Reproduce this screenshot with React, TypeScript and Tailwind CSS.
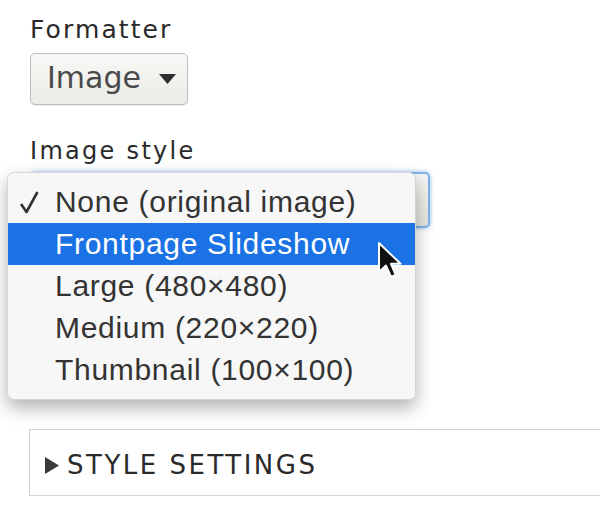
import React from "react";

const options = [
  "None (original image)",
  "Frontpage Slideshow",
  "Large (480×480)",
  "Medium (220×220)",
  "Thumbnail (100×100)",
];

const label = "text-[#2a2a2a] font-['DejaVu_Sans',sans-serif]";

function Check() {
  return (
    <svg width="22" height="24" viewBox="0 0 22 24" className="absolute left-[10px] top-[9px]">
      <path d="M3 14 L8.5 22 L19.5 2" fill="none" stroke="#333" strokeWidth="2.6" strokeLinejoin="round" />
    </svg>
  );
}

function Pointer() {
  return (
    <svg width="26" height="38" viewBox="0 0 13 19" className="absolute left-[377px] top-[241px]">
      <path
        d="M1 1 L1 15.5 L4.5 12.3 L7 18 L9.4 17 L7 11.4 L11.8 11.4 Z"
        fill="#111"
        stroke="#fff"
        strokeWidth="1"
        strokeLinejoin="round"
      />
    </svg>
  );
}

export default function App() {
  return (
    <div className="relative w-[600px] h-[521px] overflow-hidden bg-white">
      <div className="flex flex-col items-start pl-[30px] pt-[15px]">
        <div className={`${label} text-[25px] leading-[30px] tracking-[2.1px]`}>Formatter</div>

        <div className="mt-[8px] flex items-center w-[158px] h-[52px] rounded-[5px] border border-[#bdbdb9] bg-gradient-to-b from-[#f8f8f6] to-[#ebebe7] pl-[16px] pr-[11px] shadow-[0_1px_1px_rgba(0,0,0,0.08)]">
          <span className="text-[#4a4a4a] text-[30px] leading-none font-['DejaVu_Sans',sans-serif] -mt-[2px]">Image</span>
          <svg width="17" height="10" viewBox="0 0 17 10" className="ml-auto">
            <path d="M0 0 H17 L8.5 10 Z" fill="#2e2e2e" />
          </svg>
        </div>

        <div className={`${label} mt-[32px] text-[24px] leading-[28px] tracking-[2.3px]`}>Image style</div>

        <div className="relative mt-[7px]">
          <div className="w-[400px] h-[56px] rounded-[5px] border-2 border-[#7fb2ea] bg-gradient-to-b from-[#f6f6f4] to-[#e4e4e0] shadow-[0_0_4px_rgba(60,140,230,0.6)]" />

          {/* open native menu drawn over the select */}
          <div className="absolute left-[-23px] top-0 w-[409px] rounded-[7px] border border-[#d6d6d6] bg-[#f7f7f7] py-[8px] shadow-[0_8px_18px_rgba(0,0,0,0.3)] font-['Liberation_Sans',sans-serif]">
            {options.map((opt, i) => (
              <div
                key={opt}
                className={`relative h-[42px] pl-[47px] text-[30px] leading-[42px] tracking-[0.7px] ${
                  i === 1 ? "bg-[#1a72e4] text-white" : "text-[#333]"
                }`}
              >
                {i === 0 && <Check />}
                {opt}
              </div>
            ))}
          </div>
        </div>

        <div className="mt-[201px] -ml-[1px] flex items-center gap-[8px] w-[620px] h-[67px] border border-[#d2d2d2] bg-white pl-[15px] pt-[5px]">
          <svg width="14" height="17" viewBox="0 0 14 17">
            <path d="M0 0 L14 8.5 L0 17 Z" fill="#3a3a3a" />
          </svg>
          <span className="text-[#2a2a2a] text-[26px] tracking-[2.5px] font-['DejaVu_Sans',sans-serif]">
            STYLE SETTINGS
          </span>
        </div>
      </div>
      <Pointer />
    </div>
  );
}
